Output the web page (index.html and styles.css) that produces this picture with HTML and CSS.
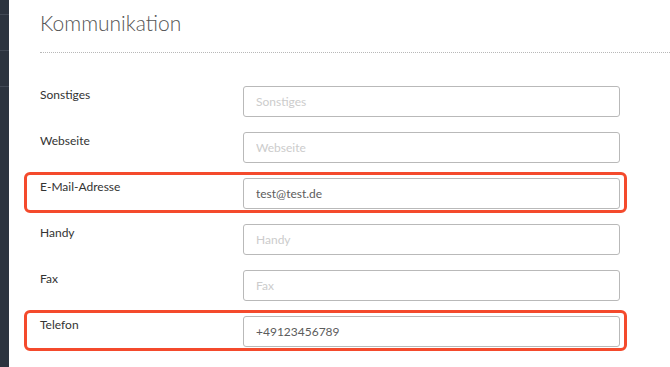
FILE: index.html
```html
<!DOCTYPE html>
<html lang="de">
<head>
  <meta charset="UTF-8">
  <meta name="viewport" content="width=device-width, initial-scale=1.0">
  <title>Kommunikation</title>
  <link rel="stylesheet" href="styles.css">
</head>
<body>
  <div class="sidebar">
    <div class="side-item first"></div>
    <div class="side-item"></div>
    <div class="side-item"></div>
  </div>
  <div class="main">
    <div class="section-head">
      <h2>Kommunikation</h2>
    </div>
    <form class="form">
      <div class="form-row">
        <label for="sonstiges">Sonstiges</label>
        <input type="text" id="sonstiges" placeholder="Sonstiges">
      </div>
      <div class="form-row">
        <label for="webseite">Webseite</label>
        <input type="text" id="webseite" placeholder="Webseite">
      </div>
      <div class="form-row marked">
        <label for="email">E-Mail-Adresse</label>
        <input type="text" id="email" placeholder="E-Mail-Adresse" value="test@test.de">
      </div>
      <div class="form-row">
        <label for="handy">Handy</label>
        <input type="text" id="handy" placeholder="Handy">
      </div>
      <div class="form-row">
        <label for="fax">Fax</label>
        <input type="text" id="fax" placeholder="Fax">
      </div>
      <div class="form-row marked">
        <label for="telefon">Telefon</label>
        <input type="text" id="telefon" placeholder="Telefon" value="+49123456789">
      </div>
    </form>
  </div>
</body>
</html>
```

FILE: styles.css
```css
body {
  margin: 0;
  font-family: 'Lato', 'Liberation Sans', sans-serif;
  background: #fff;
  color: #333;
  display: flex;
  min-height: 100vh;
  overflow: hidden;
}
.sidebar {
  width: 9px;
  flex-shrink: 0;
  background-color: #2c343f;
}
.side-item {
  height: 35px;
  border-bottom: 1px solid #414955;
}
.side-item.first {
  height: 14px;
}
.main {
  flex: 1;
  padding-left: 31px;
}
.section-head {
  padding: 10px 0 16px;
  border-bottom: 1px dotted #b8b8b8;
}
.section-head h2 {
  margin: 0;
  font-size: 21px;
  font-weight: 300;
  line-height: 26px;
  color: #555;
}
.form {
  padding-top: 27px;
}
.form-row {
  display: flex;
  align-items: flex-start;
  width: 580px;
  padding: 3px 4px 1px 13px;
  margin: 0 0 5px -16px;
  border: 3px solid transparent;
  border-radius: 6px;
}
.form-row.marked {
  border-color: #f44a2c;
}
.form-row label {
  width: 203px;
  flex-shrink: 0;
  padding-top: 1px;
  font-size: 12px;
  line-height: 16px;
  color: #333;
}
.form-row input {
  width: 377px;
  height: 31px;
  box-sizing: border-box;
  padding: 0 12px;
  border: 1px solid #b9b9b9;
  border-radius: 3px;
  font-family: inherit;
  font-size: 12px;
  color: #5c5c5c;
  outline: none;
}
.form-row input::placeholder {
  color: #ccc;
}
```
